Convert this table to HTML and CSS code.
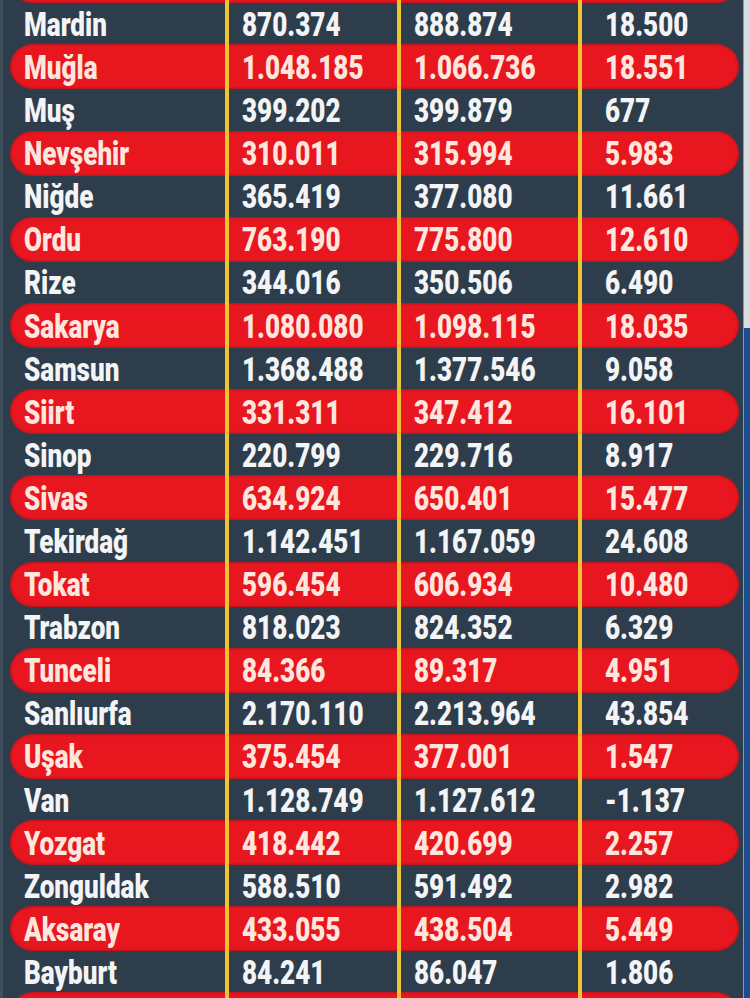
FILE: index.html
```html
<!DOCTYPE html>
<html lang="tr">
<head>
<meta charset="utf-8">
<title>Nüfus tablosu</title>
<link rel="stylesheet" href="styles.css">
</head>
<body>
<div class="page">
  <div class="edge-left"></div>
  <div class="table">
    <div class="row red"><div class="c name"></div><div class="c v"></div><div class="c v"></div><div class="c d"></div></div>
    <div class="row"><div class="c name"><span>Mardin</span></div><div class="c v"><span>870.374</span></div><div class="c v"><span>888.874</span></div><div class="c d"><span>18.500</span></div></div>
    <div class="row red"><div class="c name"><span>Muğla</span></div><div class="c v"><span>1.048.185</span></div><div class="c v"><span>1.066.736</span></div><div class="c d"><span>18.551</span></div></div>
    <div class="row"><div class="c name"><span>Muş</span></div><div class="c v"><span>399.202</span></div><div class="c v"><span>399.879</span></div><div class="c d"><span>677</span></div></div>
    <div class="row red"><div class="c name"><span>Nevşehir</span></div><div class="c v"><span>310.011</span></div><div class="c v"><span>315.994</span></div><div class="c d"><span>5.983</span></div></div>
    <div class="row"><div class="c name"><span>Niğde</span></div><div class="c v"><span>365.419</span></div><div class="c v"><span>377.080</span></div><div class="c d"><span>11.661</span></div></div>
    <div class="row red"><div class="c name"><span>Ordu</span></div><div class="c v"><span>763.190</span></div><div class="c v"><span>775.800</span></div><div class="c d"><span>12.610</span></div></div>
    <div class="row"><div class="c name"><span>Rize</span></div><div class="c v"><span>344.016</span></div><div class="c v"><span>350.506</span></div><div class="c d"><span>6.490</span></div></div>
    <div class="row red"><div class="c name"><span>Sakarya</span></div><div class="c v"><span>1.080.080</span></div><div class="c v"><span>1.098.115</span></div><div class="c d"><span>18.035</span></div></div>
    <div class="row"><div class="c name"><span>Samsun</span></div><div class="c v"><span>1.368.488</span></div><div class="c v"><span>1.377.546</span></div><div class="c d"><span>9.058</span></div></div>
    <div class="row red"><div class="c name"><span>Siirt</span></div><div class="c v"><span>331.311</span></div><div class="c v"><span>347.412</span></div><div class="c d"><span>16.101</span></div></div>
    <div class="row"><div class="c name"><span>Sinop</span></div><div class="c v"><span>220.799</span></div><div class="c v"><span>229.716</span></div><div class="c d"><span>8.917</span></div></div>
    <div class="row red"><div class="c name"><span>Sivas</span></div><div class="c v"><span>634.924</span></div><div class="c v"><span>650.401</span></div><div class="c d"><span>15.477</span></div></div>
    <div class="row"><div class="c name"><span>Tekirdağ</span></div><div class="c v"><span>1.142.451</span></div><div class="c v"><span>1.167.059</span></div><div class="c d"><span>24.608</span></div></div>
    <div class="row red"><div class="c name"><span>Tokat</span></div><div class="c v"><span>596.454</span></div><div class="c v"><span>606.934</span></div><div class="c d"><span>10.480</span></div></div>
    <div class="row"><div class="c name"><span>Trabzon</span></div><div class="c v"><span>818.023</span></div><div class="c v"><span>824.352</span></div><div class="c d"><span>6.329</span></div></div>
    <div class="row red"><div class="c name"><span>Tunceli</span></div><div class="c v"><span>84.366</span></div><div class="c v"><span>89.317</span></div><div class="c d"><span>4.951</span></div></div>
    <div class="row"><div class="c name"><span>Sanlıurfa</span></div><div class="c v"><span>2.170.110</span></div><div class="c v"><span>2.213.964</span></div><div class="c d"><span>43.854</span></div></div>
    <div class="row red"><div class="c name"><span>Uşak</span></div><div class="c v"><span>375.454</span></div><div class="c v"><span>377.001</span></div><div class="c d"><span>1.547</span></div></div>
    <div class="row"><div class="c name"><span>Van</span></div><div class="c v"><span>1.128.749</span></div><div class="c v"><span>1.127.612</span></div><div class="c d"><span>-1.137</span></div></div>
    <div class="row red"><div class="c name"><span>Yozgat</span></div><div class="c v"><span>418.442</span></div><div class="c v"><span>420.699</span></div><div class="c d"><span>2.257</span></div></div>
    <div class="row"><div class="c name"><span>Zonguldak</span></div><div class="c v"><span>588.510</span></div><div class="c v"><span>591.492</span></div><div class="c d"><span>2.982</span></div></div>
    <div class="row red"><div class="c name"><span>Aksaray</span></div><div class="c v"><span>433.055</span></div><div class="c v"><span>438.504</span></div><div class="c d"><span>5.449</span></div></div>
    <div class="row"><div class="c name"><span>Bayburt</span></div><div class="c v"><span>84.241</span></div><div class="c v"><span>86.047</span></div><div class="c d"><span>1.806</span></div></div>
    <div class="row red"><div class="c name"></div><div class="c v"></div><div class="c v"></div><div class="c d"></div></div>
  </div>
  <div class="edge-right"></div>
</div>
</body>
</html>
```

FILE: styles.css
```css
html, body {
  margin: 0;
  padding: 0;
  background: #2e3d4b;
  overflow: hidden;
}
.page {
  display: flex;
  align-items: flex-start;
  width: 750px;
  height: 998px;
  overflow: hidden;
  background: #2e3d4b;
}
.edge-left {
  width: 3px;
  height: 998px;
  flex: none;
  background: #3f4f5d;
}
.edge-right {
  width: 6px;
  height: 998px;
  flex: none;
  margin-left: auto;
  border-left: 1px solid #8f9aa4;
  background: linear-gradient(to bottom, #d9dde0 0, #d9dde0 328px, #1d4d8c 328px, #1d4d8c 100%);
}
.table {
  display: flex;
  flex-direction: column;
  margin-top: -40.8px;
  margin-left: 7px;
  width: 729px;
  flex: none;
}
.row {
  display: grid;
  grid-template-columns: 215px 172px 181px 161px;
  flex: none;
  height: 43.1px;
  font-family: Roboto, "Liberation Sans", sans-serif;
  font-weight: 900;
  font-size: 33px;
  color: #f3f4f5;
}
.row.red {
  height: 45.1px;
  margin: -1px 0;
  background: #e8161e;
  border-radius: 23px;
  box-shadow: inset 0 0 2px 1px rgba(130, 25, 35, 0.55);
  color: #fde6de;
}
.c {
  display: flex;
  align-items: center;
  white-space: nowrap;
  padding-top: 1px;
}
.c span {
  display: inline-block;
  transform: scaleX(0.79);
  transform-origin: left center;
}
.name {
  padding-left: 14px;
}
.v {
  border-left: 4px solid #eec431;
  padding-left: 13px;
}
.d {
  border-left: 4px solid #eec431;
  padding-left: 23px;
}
```
